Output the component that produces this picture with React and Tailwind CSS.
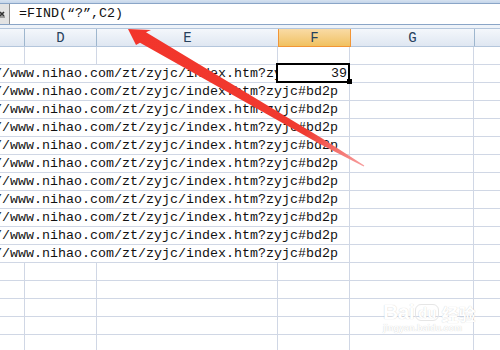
import React from "react";

const URL = "http://www.nihao.com/zt/zyjc/index.htm?zyjc#bd2p";
const MONO = "font-['Liberation_Mono','Courier_New',monospace]";

function EmptyRow() {
  return (
    <div className="flex h-[18px] shrink-0">
      <div className="w-[25px] shrink-0 border-r border-b border-[#d0d7e5]" />
      <div className="w-[72px] shrink-0 border-r border-b border-[#d0d7e5]" />
      <div className="w-[181px] shrink-0 border-r border-b border-[#d0d7e5]" />
      <div className="w-[72px] shrink-0 border-r border-b border-[#d0d7e5]" />
      <div className="w-[124px] shrink-0 border-r border-b border-[#d0d7e5]" />
      <div className="flex-1 border-b border-[#d0d7e5]" />
    </div>
  );
}

function TextRow() {
  return (
    <div className="flex h-[18px] shrink-0">
      <div className="w-[350px] shrink-0 border-r border-b border-[#d0d7e5] overflow-hidden">
        <div className="ml-[-46px] whitespace-nowrap leading-[17px] text-[#111]">{URL}</div>
      </div>
      <div className="w-[124px] shrink-0 border-r border-b border-[#d0d7e5]" />
      <div className="flex-1 border-b border-[#d0d7e5]" />
    </div>
  );
}

function SelectedRow() {
  return (
    <div className="flex h-[18px] shrink-0">
      <div className="w-[278px] shrink-0 border-r border-b border-[#d0d7e5] overflow-hidden">
        <div className="ml-[-46px] whitespace-nowrap leading-[17px] text-[#111]">{URL}</div>
      </div>
      <div className="relative w-[72px] shrink-0 border-r border-b border-[#d0d7e5]">
        <div className="pr-[2px] text-right leading-[17px] text-[#111]">39</div>
        <div className="absolute left-[-2px] top-[-2px] right-[-1px] bottom-[-1px] border-2 border-black" />
        <div className="absolute right-[-3px] bottom-[-2px] w-[5px] h-[5px] bg-black" />
      </div>
      <div className="w-[124px] shrink-0 border-r border-b border-[#d0d7e5]" />
      <div className="flex-1 border-b border-[#d0d7e5]" />
    </div>
  );
}

function HeaderCell({ w, label, flex, noRight }) {
  return (
    <div
      className={`${w} ${flex ? "flex-1" : "shrink-0"} ${noRight ? "" : "border-r"} bg-gradient-to-b from-[#f4f7fb] to-[#dfe7f2] border-[#9eb6ce] flex items-center justify-center text-[#27405c] text-[14px] leading-none`}
    >
      {label}
    </div>
  );
}

export default function App() {
  return (
    <div className={`relative w-[500px] h-[350px] overflow-hidden bg-white text-[13.33px] ${MONO}`}>
      {/* top band */}
      <div className="h-[3px] bg-gradient-to-b from-[#d6e2f0] to-[#c4d5ea]" />
      {/* formula bar */}
      <div className="flex h-[22px] border-y border-[#8aa5c7] bg-white">
        <div className="w-[10px] shrink-0 bg-[#e3e3e3] border-r border-[#8d8d8d] flex items-center overflow-hidden">
          <svg width="9" height="20" viewBox="0 0 9 20" className="shrink-0">
            <path d="M0 8 L4 12 M4 8 L0 12" stroke="#333" strokeWidth="1.6" />
            <path d="M0 13 L5 13" stroke="#555" strokeWidth="1" />
          </svg>
        </div>
        <div className="pl-[9px] leading-[20px] text-[#111] whitespace-nowrap">=FIND(“?”,C2)</div>
      </div>
      <div className="h-[3px] bg-[#eef3f9]" />
      {/* column header */}
      <div className="flex h-[19px] border-y border-[#b4c6dc]">
        <HeaderCell w="w-[25px]" label="" />
        <HeaderCell w="w-[72px]" label="D" />
        <div className="w-[181px] shrink-0 bg-gradient-to-b from-[#f4f7fb] to-[#dfe7f2] flex items-center justify-center text-[#27405c] text-[14px] leading-none">
          E
        </div>
        <div className="w-[73px] shrink-0 bg-gradient-to-b from-[#f9dba5] to-[#f1c15f] border-x border-b border-[#f29536] -mb-px flex items-center justify-center text-[#27405c] text-[14px] leading-none">
          F
        </div>
        <HeaderCell w="w-[124px]" label="G" />
        <HeaderCell w="" label="" flex noRight />
      </div>
      {/* rows */}
      <div className="flex flex-col">
        <EmptyRow />
        <SelectedRow />
        {Array.from({ length: 10 }).map((_, i) => (
          <TextRow key={i} />
        ))}
        {Array.from({ length: 5 }).map((_, i) => (
          <EmptyRow key={"e" + i} />
        ))}
      </div>

      {/* red arrow annotation */}
      <svg className="absolute left-0 top-0 pointer-events-none" width="500" height="350" viewBox="0 0 500 350">
        <defs>
          <linearGradient id="arr" x1="128" y1="29" x2="364" y2="166" gradientUnits="userSpaceOnUse">
            <stop offset="0" stopColor="#f2352b" />
            <stop offset="0.75" stopColor="#f03a30" />
            <stop offset="1" stopColor="#f7a0a0" />
          </linearGradient>
        </defs>
        <polygon
          fill="url(#arr)"
          points="128,29 136,45 140,42.7 318.5,143.2 363.7,166.4 364.3,165.6 321.5,138 146,32.3 151,30"
        />
      </svg>

      {/* watermark */}
      <div className="absolute left-[383px] top-[290px] pointer-events-none font-['Liberation_Sans',Arial,sans-serif] text-white [text-shadow:0_0_1px_rgba(0,0,0,0.22)]">
        <div className="flex items-end h-[32px]">
          <span className="text-[21px] font-bold leading-none tracking-tight">Bai</span>
          <span className="ml-[1px] mb-[1px] text-[15px] font-bold leading-none px-[2px] rounded-[6px] border border-[#e6e6e6]">du</span>
          <span className="ml-[2px] text-[17px] font-bold leading-none font-['Noto_Sans_CJK_SC',sans-serif]">经验</span>
        </div>
        <div className="text-[9px] font-bold leading-[10px] mt-[1px]">jingyan.baidu.com</div>
      </div>
    </div>
  );
}
